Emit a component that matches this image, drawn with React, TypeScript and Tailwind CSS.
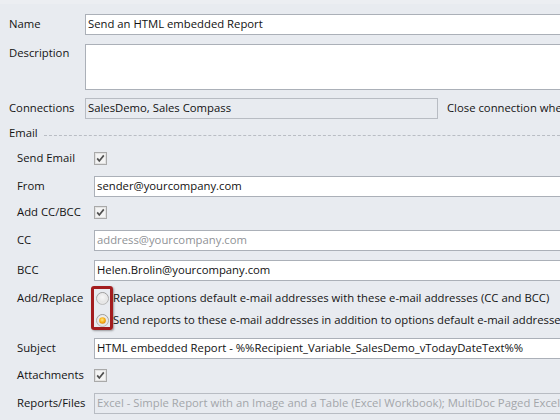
import React from "react";

const font = { fontFamily: '"Open Sans", "Noto Sans", sans-serif' };

function Check() {
  return (
    <svg width="13" height="13" viewBox="0 0 13 13" className="shrink-0">
      <rect x="0.5" y="0.5" width="12" height="12" fill="#f2f2f2" stroke="#a9a9a9" />
      <rect x="1.5" y="1.5" width="10" height="10" fill="#f4f4f4" stroke="#e2e2e2" />
      <path d="M3.2 6.4 L5.3 9 L9.8 3.4" stroke="#505050" strokeWidth="1.7" fill="none" />
    </svg>
  );
}

function Radio({ on }: { on?: boolean }) {
  const id = on ? "rOn" : "rOff";
  return (
    <svg width="13" height="13" viewBox="0 0 13 13" className="shrink-0">
      <defs>
        <linearGradient id={id + "b"} x1="0" y1="0" x2="0" y2="1">
          <stop offset="0" stopColor="#9a9a9a" />
          <stop offset="1" stopColor="#bdbdbd" />
        </linearGradient>
        <radialGradient id={id + "f"} cx="0.5" cy="0.4" r="0.6">
          <stop offset="0" stopColor="#f7f7f7" />
          <stop offset="1" stopColor="#dcdcdc" />
        </radialGradient>
        <radialGradient id={id + "d"} cx="0.45" cy="0.4" r="0.6">
          <stop offset="0" stopColor="#ffe680" />
          <stop offset="0.6" stopColor="#f7b21c" />
          <stop offset="1" stopColor="#e0860a" />
        </radialGradient>
      </defs>
      <circle cx="6.5" cy="6.5" r="6" fill={`url(#${id}f)`} stroke={`url(#${id}b)`} />
      <circle cx="6.5" cy="6.5" r="4.6" fill="none" stroke="#ececec" strokeWidth="0.8" />
      {on && <circle cx="6.5" cy="6.5" r="3.3" fill={`url(#${id}d)`} />}
    </svg>
  );
}

function TextBox({
  value,
  w = "w-[520px]",
  disabled,
  grey,
}: {
  value: string;
  w?: string;
  disabled?: boolean;
  grey?: "muted" | "faint";
}) {
  return (
    <div
      className={`${w} h-[21px] shrink-0 flex items-center pl-[2px] border whitespace-nowrap overflow-hidden ${
        disabled ? "bg-[#e8ebf0] border-[#b8bcc3]" : "bg-white border-[#abb0b8]"
      } ${grey === "muted" ? "text-[#8f9296]" : grey === "faint" ? "text-[#a3a6aa]" : "text-[#111]"}`}
    >
      {value}
    </div>
  );
}

export default function App() {
  return (
    <div
      className="w-[560px] h-[420px] overflow-hidden bg-[#e8ebf0] text-[11.3px] text-[#141414] relative"
      style={font}
    >
      <div className="h-[4px] bg-[#eceef2]" />
      <div className="pl-[9px]">
        {/* Name */}
        <div className="flex items-center mt-[10px] h-[21px]">
          <div className="w-[76px] shrink-0">Name</div>
          <TextBox value="Send an HTML embedded Report" />
        </div>
        {/* Description */}
        <div className="flex items-start mt-[9px]">
          <div className="w-[76px] shrink-0 pt-[1px]">Description</div>
          <div className="w-[520px] h-[46px] shrink-0 bg-white border border-[#abb0b8]" />
        </div>
        {/* Connections */}
        <div className="flex items-center mt-[8px] h-[21px] whitespace-nowrap">
          <div className="w-[76px] shrink-0">Connections</div>
          <TextBox value="SalesDemo, Sales Compass" w="w-[353px]" disabled />
          <div className="ml-[9px] text-[#141414]">Close connection when finished</div>
        </div>
        {/* Email header */}
        <div className="flex items-center mt-[5px] h-[18px]">
          <div className="shrink-0">Email</div>
          <div className="flex-1 ml-[6px] mt-[5px] border-t border-dashed border-[#b9bdc4]" />
        </div>

        <div className="pl-[8px]">
          {/* Send Email */}
          <div className="flex items-center mt-[6px] h-[21px]">
            <div className="w-[77px] shrink-0">Send Email</div>
            <Check />
          </div>
          {/* From */}
          <div className="flex items-center mt-[7px] h-[21px]">
            <div className="w-[77px] shrink-0">From</div>
            <TextBox value="sender@yourcompany.com" />
          </div>
          {/* Add CC/BCC */}
          <div className="flex items-center mt-[5px] h-[21px]">
            <div className="w-[77px] shrink-0">Add CC/BCC</div>
            <Check />
          </div>
          {/* CC */}
          <div className="flex items-center mt-[7px] h-[21px]">
            <div className="w-[77px] shrink-0">CC</div>
            <TextBox value="address@yourcompany.com" grey="muted" />
          </div>
          {/* BCC */}
          <div className="flex items-center mt-[9px] h-[21px]">
            <div className="w-[77px] shrink-0">BCC</div>
            <TextBox value="Helen.Brolin@yourcompany.com" />
          </div>
          {/* Add/Replace */}
          <div className="flex items-start mt-[5px] whitespace-nowrap">
            <div className="w-[74px] shrink-0 h-[22px] mt-[1px] flex items-center">Add/Replace</div>
            <div className="w-[22px] h-[44px] shrink-0 border-[3px] border-[#a31c1e] rounded-[3px] shadow-[1px_1px_2px_rgba(0,0,0,0.35)] flex flex-col items-center pt-[3px] gap-[9px]">
              <Radio />
              <Radio on />
            </div>
            <div className="flex flex-col mt-[1px]">
              <div className="h-[22px] flex items-center">
                Replace options default e-mail addresses with these e-mail addresses (CC and BCC)
              </div>
              <div className="h-[22px] flex items-center">
                Send reports to these e-mail addresses in addition to options default e-mail addresses
              </div>
            </div>
          </div>
          {/* Subject */}
          <div className="flex items-center mt-[7px] h-[21px]">
            <div className="w-[77px] shrink-0">Subject</div>
            <TextBox value="HTML embedded Report - %%Recipient_Variable_SalesDemo_vTodayDateText%%" />
          </div>
          {/* Attachments */}
          <div className="flex items-center mt-[6px] h-[21px]">
            <div className="w-[77px] shrink-0">Attachments</div>
            <Check />
          </div>
          {/* Reports/Files */}
          <div className="flex items-center mt-[7px] h-[21px]">
            <div className="w-[77px] shrink-0">Reports/Files</div>
            <TextBox
              value="Excel - Simple Report with an Image and a Table (Excel Workbook); MultiDoc Paged Excel Report (Excel Workbook)"
              disabled
              grey="faint"
            />
          </div>
        </div>
      </div>
    </div>
  );
}
